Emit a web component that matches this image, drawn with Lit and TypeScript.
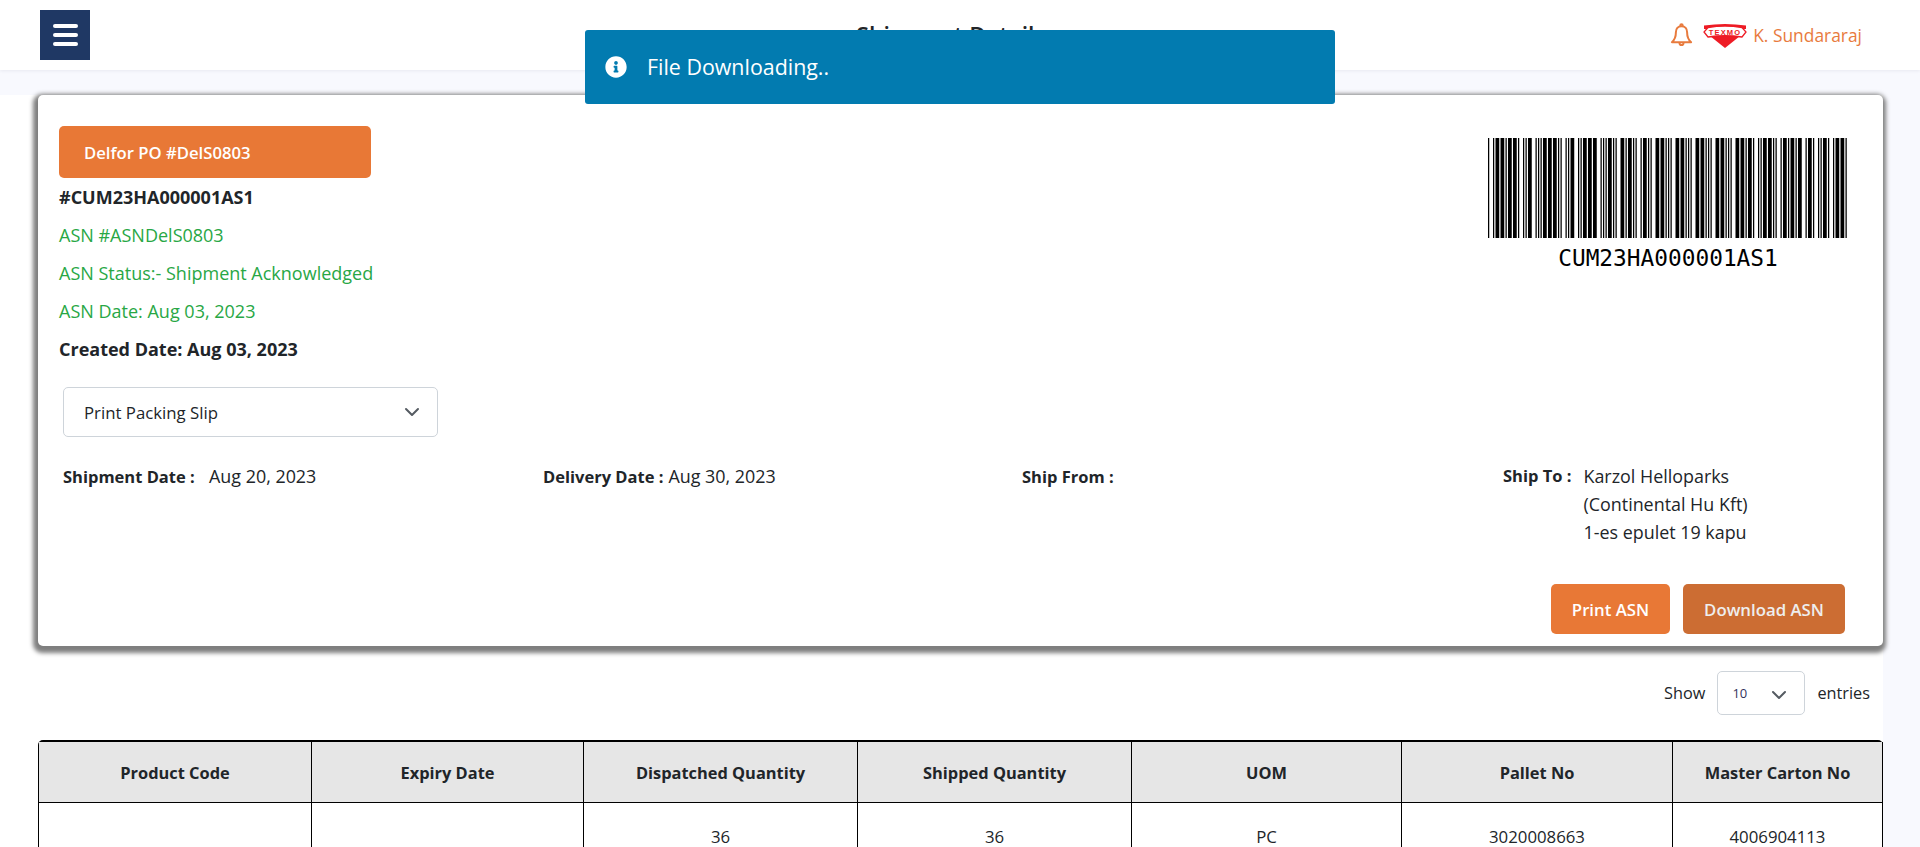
import { LitElement, html, css, svg } from "lit";
import { customElement } from "lit/decorators.js";

const C39 = "0123456789ABCDEFGHIJKLMNOPQRSTUVWXYZ-. $/+%*";
const C39E = [20957, 29783, 23639, 30485, 20951, 29813, 23669, 20855, 29789, 23645, 29975, 23831, 30533, 22295, 30149, 24005, 21623, 29981, 23837, 22301, 30023, 23879, 30545, 22343, 30161, 24017, 21959, 30065, 23921, 22385, 29015, 18263, 29141, 17879, 29045, 18293, 17783, 29021, 18269, 17477, 17489, 17681, 20753, 35770];
function code39(text: string): string {
  const enc = (c: string) => C39E[C39.indexOf(c)].toString(2);
  let r = enc("*");
  for (const c of text) r += enc(c) + "0";
  return r + enc("*");
}
function runs(bits: string): [number, number][] {
  const out: [number, number][] = [];
  let start = -1;
  for (let i = 0; i <= bits.length; i++) {
    if (bits[i] === "1") { if (start < 0) start = i; }
    else if (start >= 0) { out.push([start, i - start]); start = -1; }
  }
  return out;
}

const COLS = ["Product Code", "Expiry Date", "Dispatched Quantity", "Shipped Quantity", "UOM", "Pallet No", "Master Carton No"];
const WIDTHS = [273, 272, 274, 274, 270, 271, 210];
const ROW = ["", "", "36", "36", "PC", "3020008663", "4006904113"];

const chevron = html`<svg class="chev" viewBox="0 0 16 16" fill="none" stroke="#555b62" stroke-width="2" stroke-linecap="round" stroke-linejoin="round"><path d="M2 5l6 6 6-6" /></svg>`;

@customElement("app-root")
export class AppRoot extends LitElement {
  static styles = css`
    :host { display: block; height: 847px; overflow: hidden; background: #f8f9fe; font-family: "Open Sans", "Noto Sans", sans-serif; font-size: 17.9px; color: #212529; position: relative; }
    .hdr { height: 70px; background: #fff; box-shadow: 0 1px 3px rgba(50,50,93,.08); display: grid; grid-template-columns: 1fr auto 1fr; align-items: center; padding: 0 58px 0 40px; }
    .burger { width: 50px; height: 50px; background: #1f3864; display: flex; flex-direction: column; justify-content: center; align-items: center; gap: 5px; }
    .burger i { display: block; width: 25px; height: 4px; border-radius: 2px; background: #fff; }
    .title { font-size: 23px; font-weight: 600; color: #212529; }
    .user { justify-self: end; display: flex; align-items: center; color: #e87b3e; font-size: 17.4px; }
    .bell { width: 23px; height: 24px; margin-right: 10px; }
    .logo { width: 44px; height: 25px; margin-right: 6px; }
    .logo text { font-family: "Liberation Sans", sans-serif; font-weight: 700; font-size: 7.5px; fill: #ee1c25; letter-spacing: 1.2px; }
    .main { margin: 25px 37px 0 0; background: #fff; height: 752px; padding: 0 0 0 38px; }
    .card { width: 1845px; height: 551px; box-sizing: border-box; background: #fff; border-radius: 5px; box-shadow: -1px 3px 4px 4px #7f7f7f; padding: 31px 21px 0 21px; display: flex; flex-direction: column; }
    .top { display: flex; justify-content: space-between; height: 261px; }
    .badge { width: 312px; height: 52px; box-sizing: border-box; padding-left: 25px; display: flex; align-items: center; background: #e87836; color: #fff; border-radius: 5px; font-weight: 600; font-size: 16.7px; }
    .line { height: 38px; display: flex; align-items: center; font-size: 18px; }
    .b { font-weight: 700; }
    .g { color: #28a745; }
    .bc { width: 360px; margin: 12px 14px 0 0; display: flex; flex-direction: column; align-items: center; }
    .bc svg { width: 360px; height: 100px; display: block; }
    .bc span { font-family: "DejaVu Sans Mono", monospace; font-size: 22.8px; line-height: 24px; margin-top: 8px; color: #000; }
    .sel { box-sizing: border-box; width: 375px; height: 50px; margin: 0 0 0 4px; border: 1px solid #ced4da; border-radius: 5px; display: flex; align-items: center; justify-content: space-between; padding: 0 17px 0 20px; font-size: 16.8px; }
    .chev { width: 16px; height: 16px; }
    .ships { display: grid; grid-template-columns: 480px 479px 481px 1fr; margin: 25px 0 0 4px; line-height: 28px; }
    .ships .b { font-size: 16.5px; margin-right: 5px; }
    .to { display: flex; gap: 7px; }
    .btns { display: flex; justify-content: flex-end; gap: 13px; margin: auto 17px 12px 0; }
    .btn { height: 50px; box-sizing: border-box; border-radius: 5px; background: #e87836; color: #fff; font-weight: 600; display: flex; align-items: center; justify-content: center; width: 119px; font-size: 16.8px; }
    .btn.dark { width: 162px; background: #cc6d33; color: #eee; }
    .len { display: flex; justify-content: flex-end; align-items: center; gap: 12px; margin: 25px 13px 0 0; height: 44px; font-size: 16.3px; }
    .len .box { box-sizing: border-box; width: 88px; height: 44px; border: 1px solid #ced4da; border-radius: 5px; display: flex; align-items: center; justify-content: space-between; padding: 0 17px 0 14px; font-size: 13px; color: #32325d; }
    .len .chev { margin-top: 4px; }
    table { border-collapse: separate; border-spacing: 0; table-layout: fixed; width: 1844px; margin-top: 25px; border-top: 2px solid #000; border-left: 1.5px solid #000; border-radius: 5px 5px 0 0; }
    th, td { border-right: 1.5px solid #000; text-align: center; box-sizing: border-box; padding: 0; }
    th { background: #e6e6e6; height: 61px; font-weight: 700; border-bottom: 1px solid #000; font-size: 16.4px; }
    td { height: 70px; padding-bottom: 4px; font-size: 16.8px; }
    .toast { position: absolute; left: 585px; top: 30px; width: 750px; height: 74px; box-sizing: border-box; background: #027bb0; border-radius: 3px; color: #fff; display: flex; align-items: center; padding-left: 20px; gap: 20px; font-size: 21.4px; }
    .toast svg { width: 22px; height: 22px; }
    .toast span { padding-bottom: 2px; }
  `;

  render() {
    const bits = code39("CUM23HA000001AS1");
    const bars = runs(bits).map(([x, w]) => svg`<rect x=${x} y="0" width=${w} height="10" />`);
    return html`
      <header class="hdr">
        <div class="burger"><i></i><i></i><i></i></div>
        <div class="title">Shipment Details</div>
        <div class="user">
          <svg class="bell" viewBox="0 0 23 24" fill="none" stroke="#e87b3e" stroke-width="2" stroke-linejoin="round" stroke-linecap="round"><path d="M11.5 3.200c-3.600 0-5.600 2.600-5.600 6 0 5-1.300 7.600-4 10h19.200c-2.700-2.400-4-5-4-10 0-3.400-2-6-5.600-6z" /><path d="M10.300 2.500c0-1.600 2.400-1.600 2.400 0" /><path d="M9.500 20c0 2.800 4 2.800 4 0" /></svg>
          <svg class="logo" viewBox="0 0 44 25"><path d="M1 2.500Q22-.5 43 2.500V6H1z" fill="#ee1c25" /><path d="M7 13h30L22 25z" fill="#ee1c25" /><path d="M5 4.500Q22 1.500 39 4.500L43 9l-4 5Q22 11.500 5 14L1 9z" fill="#fff" stroke="#ee1c25" stroke-width="1.300" /><text x="22" y="11.500" text-anchor="middle">TEXMO</text></svg>
          K. Sundararaj
        </div>
      </header>
      <div class="main">
        <section class="card">
          <div class="top">
            <div>
              <div class="badge">Delfor PO #DelS0803</div>
              <div>
                <div class="line b">#CUM23HA000001AS1</div>
                <div class="line g">ASN #ASNDelS0803</div>
                <div class="line g">ASN Status:- Shipment Acknowledged</div>
                <div class="line g">ASN Date: Aug 03, 2023</div>
                <div class="line b">Created Date: Aug 03, 2023</div>
              </div>
            </div>
            <div class="bc">
              <svg viewBox="0 0 ${bits.length} 10" preserveAspectRatio="none" fill="#000">${bars}</svg>
              <span>CUM23HA000001AS1</span>
            </div>
          </div>
          <div class="sel"><span>Print Packing Slip</span>${chevron}</div>
          <div class="ships">
            <div><span class="b">Shipment Date :</span>&nbsp; Aug 20, 2023</div>
            <div><span class="b">Delivery Date :</span>Aug 30, 2023</div>
            <div><span class="b">Ship From :</span></div>
            <div class="to"><span class="b">Ship To :</span><div>Karzol Helloparks<br />(Continental Hu Kft)<br />1-es epulet 19 kapu</div></div>
          </div>
          <div class="btns"><div class="btn">Print ASN</div><div class="btn dark">Download ASN</div></div>
        </section>
        <div class="len"><span>Show</span><div class="box"><span>10</span>${chevron}</div><span>entries</span></div>
        <table>
          <colgroup>${WIDTHS.map((w) => html`<col style="width:${w}px" />`)}</colgroup>
          <thead><tr>${COLS.map((c) => html`<th>${c}</th>`)}</tr></thead>
          <tbody><tr>${ROW.map((c) => html`<td>${c}</td>`)}</tr></tbody>
        </table>
      </div>
      <div class="toast">
        <svg viewBox="0 0 512 512" fill="#fff"><path d="M256 8C119 8 8 119 8 256s111 248 248 248 248-111 248-248S393 8 256 8zm0 110c23 0 42 19 42 42s-19 42-42 42-42-19-42-42 19-42 42-42zm56 254c0 7-5 12-12 12h-88c-7 0-12-5-12-12v-24c0-7 5-12 12-12h12v-64h-12c-7 0-12-5-12-12v-24c0-7 5-12 12-12h64c7 0 12 5 12 12v100h12c7 0 12 5 12 12v24z" /></svg>
        <span>File Downloading..</span>
      </div>
    `;
  }
}
